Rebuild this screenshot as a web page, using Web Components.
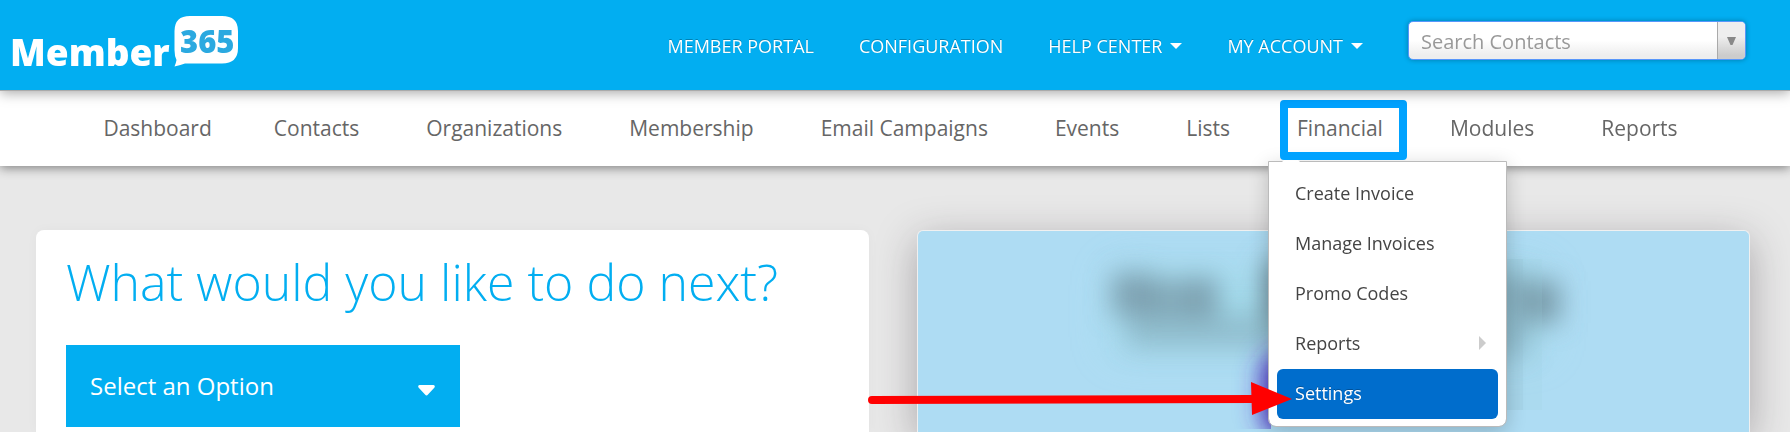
<!DOCTYPE html>
<html lang="en">
<head>
<meta charset="utf-8">
<meta name="viewport" content="width=device-width, initial-scale=1">
<title>Member365</title>
<style>
  body {
    margin: 0;
    min-height: 100vh;
    overflow: hidden;
    background-color: #e8e8e8;
    font-family: "Open Sans", "Noto Sans", sans-serif;
    --brand: #02aef1;
  }
</style>
</head>
<body>
<member-app></member-app>

<script>
class MemberLogo extends HTMLElement {
  constructor() {
    super();
    this.attachShadow({ mode: 'open' });
  }

  connectedCallback() {
    this.shadowRoot.innerHTML = `
      <style>
        :host { display: block; }
        a, svg { display: block; }
        text {
          font-family: "Open Sans", sans-serif;
          font-weight: 800;
        }
      </style>
      <a href="#" aria-label="Member365">
        <svg width="240" height="84" viewBox="0 0 240 84">
          <path fill="#fff" d="M190 16H222Q238 16 238 31V48Q238 63.500 222 63.500H185Q181 65 174.500 66.500Q176 63 176.500 60Q174.500 56 174.500 50V31Q174.500 16 190 16Z"/>
          <text x="10" y="66" font-size="37" fill="#fff">Member</text>
          <text x="180" y="53" font-size="31" fill="#2ba9e0">365</text>
        </svg>
      </a>
    `;
  }
}

customElements.define('member-logo', MemberLogo);

class TopLink extends HTMLElement {
  constructor() {
    super();
    this.attachShadow({ mode: 'open' });
  }

  connectedCallback() {
    this.shadowRoot.innerHTML = `
      <style>
        :host { display: block; }
        a {
          display: flex;
          align-items: center;
          gap: 8px;
          color: #fff;
          font-size: 18px;
          line-height: 24px;
          text-decoration: none;
          text-shadow: 0 -1px 0 rgba(0, 0, 0, 0.25);
          white-space: nowrap;
        }
        svg { display: none; }
        :host([caret]) svg { display: block; }
      </style>
      <a href="#"><slot></slot><svg width="12" height="6" viewBox="0 0 12 6"><path fill="#fff" d="M0 0H12L6 6Z"/></svg></a>
    `;
  }
}

customElements.define('top-link', TopLink);

class ContactSearch extends HTMLElement {
  constructor() {
    super();
    this.attachShadow({ mode: 'open' });
  }

  connectedCallback() {
    this.shadowRoot.innerHTML = `
      <style>
        :host { display: block; }
        .box {
          display: flex;
          box-sizing: border-box;
          width: 338px;
          height: 39px;
          border: 1px solid #5897fb;
          border-radius: 5px;
          overflow: hidden;
          background: linear-gradient(#fff 0%, #fff 50%, #eee 90%);
          box-shadow: 0 0 5px rgba(0, 0, 0, 0.3);
        }
        input {
          flex: 1;
          min-width: 0;
          border: 0;
          padding: 2px 12px 0;
          background: none;
          font: 20px "Open Sans", sans-serif;
          outline: none;
        }
        input::placeholder { color: #999; opacity: 1; }
        button {
          width: 28px;
          border: 0;
          border-left: 1px solid #aaa;
          padding: 0;
          display: flex;
          align-items: center;
          justify-content: center;
          background: linear-gradient(#eee 0%, #eee 40%, #ccc 90%);
        }
      </style>
      <div class="box">
        <input type="text" placeholder="Search Contacts" aria-label="Search Contacts">
        <button type="button" aria-label="Show contacts">
          <svg width="9" height="8" viewBox="0 0 9 8"><path fill="#888" d="M0 0H9L5.500 8H3.500Z"/></svg>
        </button>
      </div>
    `;
  }
}

customElements.define('contact-search', ContactSearch);

class TopBar extends HTMLElement {
  constructor() {
    super();
    this.attachShadow({ mode: 'open' });
  }

  connectedCallback() {
    this.shadowRoot.innerHTML = `
      <style>
        :host {
          display: block;
          position: relative;
          z-index: 1;
          background-color: var(--brand);
          border-bottom: 1px solid #aaa;
          box-shadow: 0 2px 12px rgba(0, 0, 0, 0.35);
        }
        header {
          display: flex;
          align-items: flex-start;
          justify-content: space-between;
          height: 90px;
        }
        nav {
          display: flex;
          gap: 45px;
          padding: 21px 44px 0 0;
        }
        top-link { padding-top: 13px; }
      </style>
      <header>
        <member-logo></member-logo>
        <nav aria-label="Account">
          <top-link>MEMBER PORTAL</top-link>
          <top-link>CONFIGURATION</top-link>
          <top-link caret>HELP CENTER</top-link>
          <top-link caret>MY ACCOUNT</top-link>
          <contact-search></contact-search>
        </nav>
      </header>
    `;
  }
}

customElements.define('top-bar', TopBar);

class MenuItem extends HTMLElement {
  constructor() {
    super();
    this.attachShadow({ mode: 'open' });
  }

  connectedCallback() {
    this.shadowRoot.innerHTML = `
      <style>
        :host { display: block; }
        a {
          display: flex;
          align-items: center;
          justify-content: space-between;
          height: 48px;
          padding: 0 12px 2px 18px;
          border-radius: 6px;
          color: #444;
          font-size: 18px;
          text-decoration: none;
          white-space: nowrap;
        }
        :host([selected]) a {
          background-color: #006dcc;
          color: #fff;
          text-shadow: 0 -1px 0 rgba(0, 0, 0, 0.25);
        }
        svg { display: none; }
        :host([submenu]) svg { display: block; }
      </style>
      <a href="#"><slot></slot><svg width="7" height="14" viewBox="0 0 7 14"><path fill="#ccc" d="M0 0L7 7L0 14Z"/></svg></a>
    `;
  }
}

customElements.define('menu-item', MenuItem);

class DropMenu extends HTMLElement {
  constructor() {
    super();
    this.attachShadow({ mode: 'open' });
  }

  connectedCallback() {
    this.shadowRoot.innerHTML = `
      <style>
        :host {
          display: block;
          box-sizing: border-box;
          width: 239px;
          padding: 7px 8px;
          background-color: #fff;
          border: 1px solid #bbb;
          border-radius: 0 0 8px 8px;
          background-clip: padding-box;
          box-shadow: 0 5px 20px rgba(0, 0, 0, 0.2);
        }
        :host::before {
          content: "";
          position: absolute;
          top: -9px;
          left: 13px;
          border: 9px solid transparent;
          border-top: 0;
          border-bottom-color: #fff;
        }
      </style>
      <slot></slot>
    `;
  }
}

customElements.define('drop-menu', DropMenu);

class PointerArrow extends HTMLElement {
  constructor() {
    super();
    this.attachShadow({ mode: 'open' });
  }

  connectedCallback() {
    this.shadowRoot.innerHTML = `
      <style>
        :host { display: block; pointer-events: none; }
        svg { display: block; }
      </style>
      <svg width="424" height="34" viewBox="0 0 424 34" aria-hidden="true">
        <path stroke="#f00" stroke-width="8" stroke-linecap="round" d="M4 18L386 17"/>
        <path fill="#f00" d="M383 0L424 17L384 33Z"/>
      </svg>
    `;
  }
}

customElements.define('pointer-arrow', PointerArrow);

class MainNav extends HTMLElement {
  constructor() {
    super();
    this.attachShadow({ mode: 'open' });
  }

  connectedCallback() {
    this.shadowRoot.innerHTML = `
      <style>
        :host {
          display: block;
          position: relative;
          background-color: #fff;
          box-shadow: 0 2px 10px rgba(0, 0, 0, 0.45);
        }
        ul {
          display: flex;
          justify-content: center;
          margin: 0;
          padding: 0;
          list-style: none;
        }
        li {
          position: relative;
          padding: 0 34px 0 33px;
        }
        li:first-child { padding: 0 29px 0 25px; }
        a {
          color: #666;
          font-size: 21px;
          line-height: 75px;
          text-decoration: none;
          white-space: nowrap;
        }
        .frame {
          position: absolute;
          inset: 9px 10px 6px 16px;
          border: 8px solid #00a2ff;
          border-radius: 4px;
          pointer-events: none;
          z-index: 2;
        }
        drop-menu {
          position: absolute;
          top: 70px;
          left: 4px;
        }
        pointer-arrow {
          position: absolute;
          top: 291px;
          left: -396px;
        }
      </style>
      <nav aria-label="Main">
        <ul>
          <li><a href="#">Dashboard</a></li>
          <li><a href="#">Contacts</a></li>
          <li><a href="#">Organizations</a></li>
          <li><a href="#">Membership</a></li>
          <li><a href="#">Email Campaigns</a></li>
          <li><a href="#">Events</a></li>
          <li><a href="#">Lists</a></li>
          <li>
            <a href="#">Financial</a>
            <drop-menu>
              <menu-item>Create Invoice</menu-item>
              <menu-item>Manage Invoices</menu-item>
              <menu-item>Promo Codes</menu-item>
              <menu-item submenu>Reports</menu-item>
              <menu-item selected>Settings</menu-item>
            </drop-menu>
            <span class="frame"></span>
            <pointer-arrow></pointer-arrow>
          </li>
          <li><a href="#">Modules</a></li>
          <li><a href="#">Reports</a></li>
        </ul>
      </nav>
    `;
  }
}

customElements.define('main-nav', MainNav);

class NextCard extends HTMLElement {
  constructor() {
    super();
    this.attachShadow({ mode: 'open' });
  }

  connectedCallback() {
    this.shadowRoot.innerHTML = `
      <style>
        :host {
          display: block;
          padding: 18px 30px 5px;
          background-color: #fff;
          border-radius: 8px 8px 0 0;
          box-shadow: 0 0 12px rgba(0, 0, 0, 0.03);
        }
        h1 {
          margin: 0 0 29px;
          color: var(--brand);
          font-size: 50px;
          font-weight: 300;
          line-height: 68px;
        }
        .picker {
          display: grid;
          align-items: center;
          width: 394px;
          background-color: var(--brand);
        }
        select, svg { grid-area: 1 / 1; }
        select {
          appearance: none;
          width: 100%;
          height: 82px;
          margin: 0;
          border: 0;
          border-radius: 0;
          padding: 0 60px 2px 24px;
          background: none;
          color: #fff;
          font: 24px "Open Sans", sans-serif;
        }
        svg {
          justify-self: end;
          margin: 8px 25px 0 0;
          pointer-events: none;
        }
      </style>
      <h1>What would you like to do next?</h1>
      <div class="picker">
        <select aria-label="What would you like to do next?">
          <option>Select an Option</option>
        </select>
        <svg width="17" height="11" viewBox="0 0 17 11"><path fill="#fff" d="M1.500 0H15.500Q17.500 0.500 16.500 2.500L10 9.500Q8.500 11.500 7 9.500L0.500 2.500Q-0.500 0.500 1.500 0Z"/></svg>
      </div>
    `;
  }
}

customElements.define('next-card', NextCard);

class PromoCard extends HTMLElement {
  constructor() {
    super();
    this.attachShadow({ mode: 'open' });
  }

  connectedCallback() {
    this.shadowRoot.innerHTML = `
      <style>
        :host {
          display: block;
          overflow: hidden;
          background-color: #aedcf3;
          border: 1px solid #f0f0f0;
          border-bottom: 0;
          border-radius: 6px 6px 0 0;
          box-shadow: 0 10px 40px rgba(50, 40, 50, 0.35);
        }
        svg { display: block; margin: 0 auto; }
      </style>
      <!-- obscured headline and button -->
      <svg width="832" height="201" viewBox="0 0 832 201" aria-hidden="true">
        <defs>
          <filter id="soft" x="-100%" y="-100%" width="300%" height="300%"><feGaussianBlur stdDeviation="13"/></filter>
          <filter id="wide" x="-50%" y="-100%" width="200%" height="300%"><feGaussianBlur stdDeviation="20"/></filter>
          <clipPath id="left"><rect x="0" y="14" width="353" height="184"/></clipPath>
        </defs>
        <rect x="195" y="40" width="430" height="80" fill="#9edbe8" opacity="0.6" filter="url(#wide)"/>
        <g fill="#72909f" filter="url(#soft)">
          <rect x="194" y="42" width="42" height="42" opacity="0.75"/>
          <rect x="230" y="48" width="70" height="38" opacity="0.65"/>
          <rect x="266" y="46" width="34" height="38" opacity="0.4"/>
          <rect x="345" y="30" width="50" height="60" opacity="0.9"/>
          <rect x="600" y="50" width="42" height="42" opacity="0.85"/>
          <rect x="570" y="42" width="40" height="40" opacity="0.6"/>
          <rect x="208" y="83" width="180" height="34" opacity="0.4"/>
          <rect x="570" y="85" width="40" height="40" opacity="0.5"/>
        </g>
        <g clip-path="url(#left)">
          <rect x="344" y="122" width="60" height="82" rx="20" fill="#4a25c8" filter="url(#soft)"/>
        </g>
        <rect x="585" y="28" width="20" height="151" fill="#83adc0" opacity="0.15"/>
        <rect x="585" y="28" width="39" height="151" fill="#9bd3df" opacity="0.15"/>
      </svg>
    `;
  }
}

customElements.define('promo-card', PromoCard);

class MemberApp extends HTMLElement {
  constructor() {
    super();
    this.attachShadow({ mode: 'open' });
  }

  connectedCallback() {
    this.shadowRoot.innerHTML = `
      <style>
        :host { display: block; }
        main-nav { z-index: 0; }
        main {
          display: grid;
          grid-template-columns: 1fr 1fr;
          gap: 48px;
          padding: 64px 40px 0 36px;
        }
      </style>
      <top-bar></top-bar>
      <main-nav></main-nav>
      <main>
        <next-card></next-card>
        <promo-card></promo-card>
      </main>
    `;
  }
}

customElements.define('member-app', MemberApp);
</script>
</body>
</html>
